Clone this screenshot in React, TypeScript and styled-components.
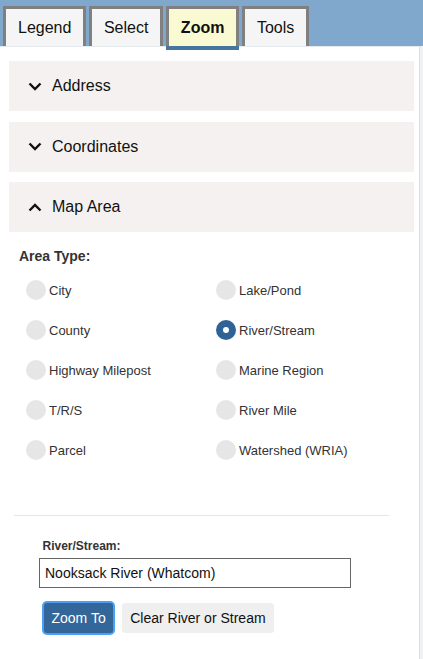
import styled, { createGlobalStyle } from 'styled-components';

const GlobalStyle = createGlobalStyle`
  html, body {
    margin: 0;
    padding: 0;
    background: #eef2f4;
    font-family: "Liberation Sans", Arial, sans-serif;
  }
  * { box-sizing: border-box; }
`;

const tabs = ['Legend', 'Select', 'Zoom', 'Tools'];
const sections = [
  { title: 'Address', open: false },
  { title: 'Coordinates', open: false },
  { title: 'Map Area', open: true },
];
const areaTypes = [
  'City', 'Lake/Pond',
  'County', 'River/Stream',
  'Highway Milepost', 'Marine Region',
  'T/R/S', 'River Mile',
  'Parcel', 'Watershed (WRIA)',
];

const Chevron = ({ up }: { up?: boolean }) => (
  <svg width="14" height="9" viewBox="0 0 14 9">
    <polyline
      points={up ? '1.5,7.5 7,2 12.5,7.5' : '1.5,1.5 7,7 12.5,1.5'}
      fill="none"
      stroke="#111"
      strokeWidth="2.4"
    />
  </svg>
);

const App = () => {
  return (
    <>
      <GlobalStyle />
      <Header>
        {tabs.map((t) => (
          <Tab key={t} $active={t === 'Zoom'}>{t}</Tab>
        ))}
      </Header>
      <Panel>
        <Accordions>
          {sections.map((s) => (
            <AccordionHead key={s.title}>
              <Chevron up={s.open} />
              <span>{s.title}</span>
            </AccordionHead>
          ))}
        </Accordions>
        <Body>
          <FieldLabel>Area Type:</FieldLabel>
          <RadioGrid>
            {areaTypes.map((a) => (
              <RadioItem key={a}>
                <RadioDot $checked={a === 'River/Stream'} />
                {a}
              </RadioItem>
            ))}
          </RadioGrid>
        </Body>
        <Divider />
        <Form>
          <SmallLabel>River/Stream:</SmallLabel>
          <TextInput defaultValue="Nooksack River (Whatcom)" />
          <Buttons>
            <Button $primary>Zoom To</Button>
            <Button>Clear River or Stream</Button>
          </Buttons>
        </Form>
      </Panel>
    </>
  );
};

const Header = styled.div`
  display: flex;
  align-items: flex-end;
  gap: 2.5px;
  height: 46px;
  padding-left: 3px;
  background: #80a8cc;
`;

const Tab = styled.div<{ $active?: boolean }>`
  position: relative;
  z-index: 1;
  height: 40px;
  line-height: 37px;
  padding: 0 12px;
  border: 3px solid #808080;
  border-bottom: none;
  background: ${(p) => (p.$active ? '#fafad2' : '#f5f5f5')};
  color: #111;
  font-size: 16px;
  font-weight: ${(p) => (p.$active ? 700 : 400)};
  box-shadow: ${(p) => (p.$active ? '0 4px 0 0 #46759e' : 'none')};
`;

const Panel = styled.div`
  width: 420px;
  min-height: 613px;
  background: #fff;
  border-top: 1px solid #e4eaee;
  border-right: 1px solid #d9e1e5;
  padding: 14px 5px 0 9px;
`;

const Accordions = styled.div`
  display: flex;
  flex-direction: column;
  gap: 10.5px;
`;

const AccordionHead = styled.div`
  display: flex;
  align-items: center;
  gap: 10px;
  height: 50px;
  padding-left: 19px;
  background: #f5f1f0;
  color: #111;
  font-size: 16px;
`;

const Body = styled.div`
  padding: 16px 0 0 10px;
`;

const FieldLabel = styled.div`
  font-size: 14px;
  font-weight: 700;
  line-height: 16px;
  color: #333;
  margin-bottom: 6px;
`;

const RadioGrid = styled.div`
  display: grid;
  grid-template-columns: 190px 1fr;
  grid-auto-rows: 40px;
  padding-left: 7px;
`;

const RadioItem = styled.label`
  display: flex;
  align-items: center;
  gap: 3px;
  font-size: 13px;
  color: #333;
`;

const RadioDot = styled.span<{ $checked?: boolean }>`
  width: 20px;
  height: 20px;
  border-radius: 50%;
  background: ${(p) => (p.$checked ? '#2f6397' : '#e6e6e6')};
  display: flex;
  align-items: center;
  justify-content: center;

  &::after {
    content: '';
    display: ${(p) => (p.$checked ? 'block' : 'none')};
    width: 6px;
    height: 6px;
    border-radius: 50%;
    background: #fff;
  }
`;

const Divider = styled.hr`
  margin: 45px 0 0 5px;
  width: 375px;
  border: none;
  border-top: 1px solid #e5e5e5;
`;

const Form = styled.div`
  padding: 23px 0 0 30px;
`;

const SmallLabel = styled.div`
  font-size: 12px;
  font-weight: 700;
  line-height: 14px;
  color: #333;
  margin: 0 0 5px 3.5px;
`;

const TextInput = styled.input`
  display: block;
  width: 312px;
  height: 30px;
  padding: 0 5px;
  border: 1px solid #666;
  font-family: "Liberation Sans", Arial, sans-serif;
  font-size: 14px;
  color: #111;
  outline: none;
`;

const Buttons = styled.div`
  display: flex;
  gap: 9px;
  margin: 15px 0 0 5px;
`;

const Button = styled.button<{ $primary?: boolean }>`
  height: 30px;
  padding: 0 ${(p) => (p.$primary ? '7.5px' : '8px')};
  border: none;
  border-radius: 3px;
  font-family: "Liberation Sans", Arial, sans-serif;
  font-size: 14px;
  background: ${(p) => (p.$primary ? '#336699' : '#efefef')};
  color: ${(p) => (p.$primary ? '#fff' : '#111')};
  box-shadow: ${(p) => (p.$primary ? '0 0 0 2px #4aa0f2' : 'none')};
`;

export default App;
